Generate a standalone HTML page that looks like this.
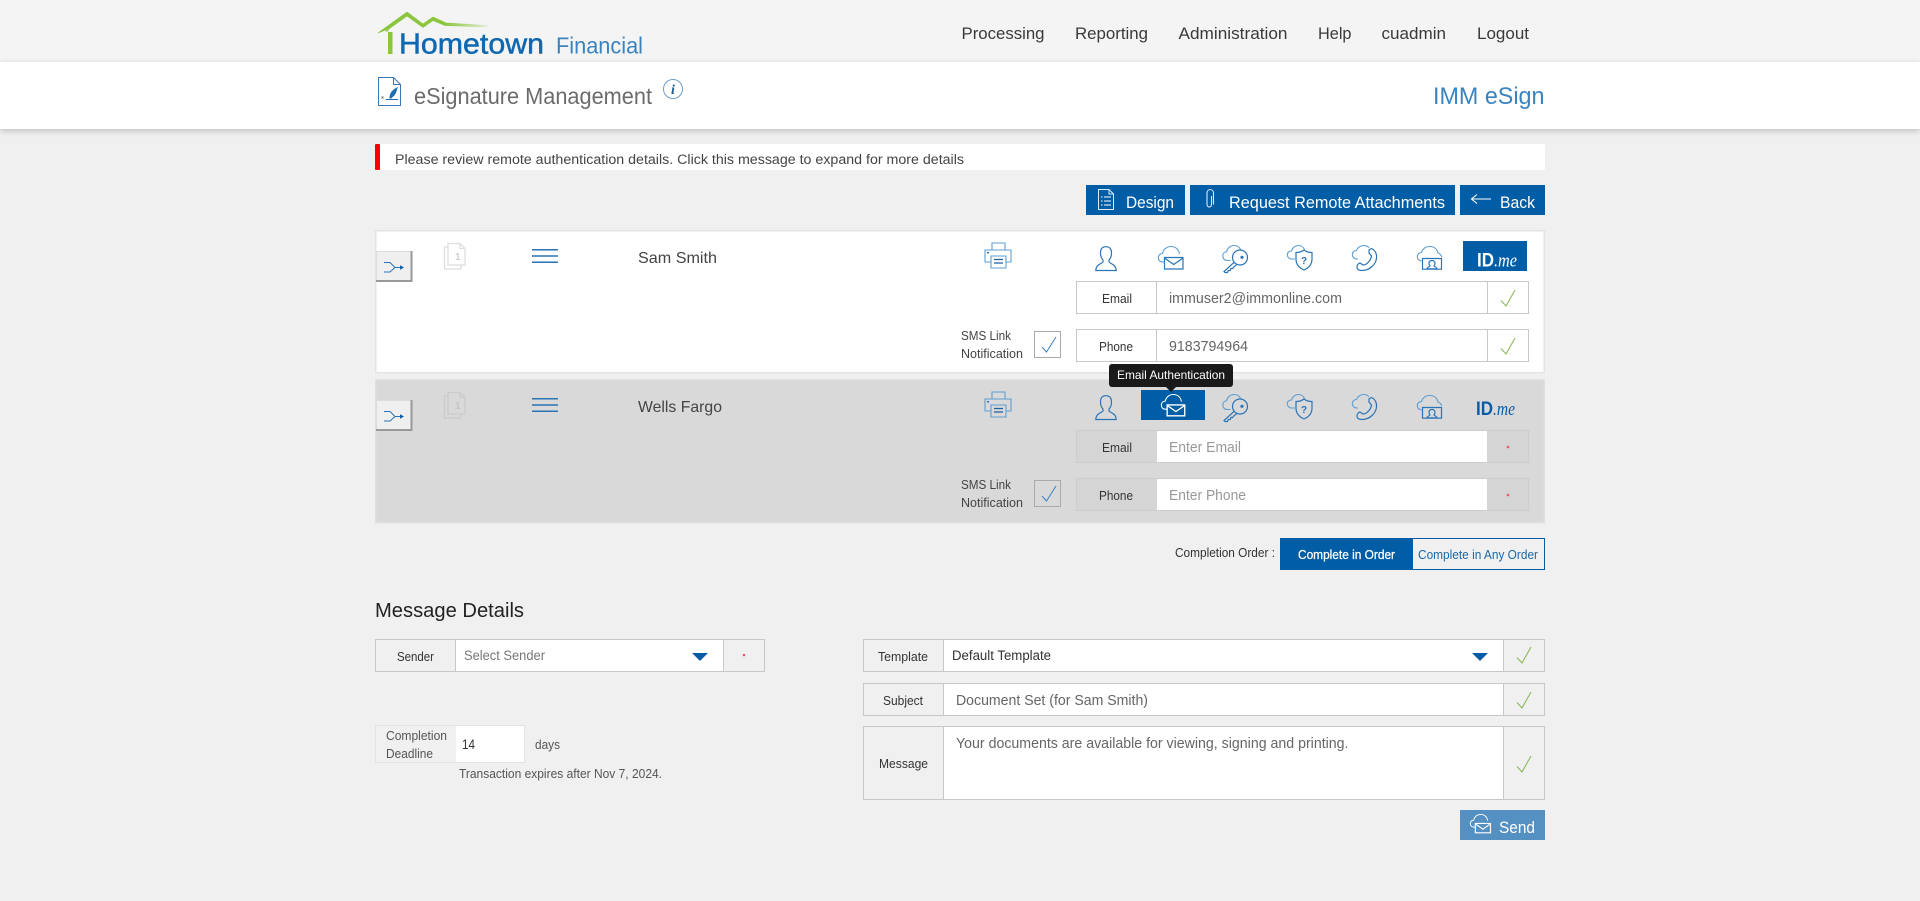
<!DOCTYPE html>
<html lang="en">
<head>
<meta charset="utf-8">
<title>eSignature Management</title>
<style>
html,body{margin:0;padding:0;width:1920px;height:901px;overflow:hidden;background:#f0f0f0}
#top{position:absolute;left:0;top:0;width:1920px;height:62px;background:#f4f4f4}
#bar{position:absolute;left:0;top:62px;width:1920px;height:67px;background:#fff;box-shadow:0 2px 6px rgba(0,0,0,.2)}
svg{position:absolute;left:0;top:0}
text{font-family:"Liberation Sans",sans-serif;white-space:pre}
.n{font-size:17px;fill:#3a3a3a}
.l{font-size:13px;fill:#333}
.v{font-size:15px;fill:#666}
.p{font-size:15px;fill:#999}
.b{font-size:16.5px;fill:#fff}
.g{font-size:13px;fill:#555}
.ic{fill:none;stroke:#2a74b8;stroke-width:1.2}
.cl{fill:none;stroke:#5f9ed2;stroke-width:1.1}
</style>
</head>
<body>
<div id="top"></div>
<div id="bar"></div>
<svg width="1920" height="901" viewBox="0 0 1920 901" xmlns="http://www.w3.org/2000/svg">
<defs>
<linearGradient id="roof" x1="378" x2="487" y1="0" y2="0" gradientUnits="userSpaceOnUse">
<stop offset="0" stop-color="#8cc63f"/><stop offset=".6" stop-color="#8cc63f"/><stop offset="1" stop-color="#8cc63f" stop-opacity=".1"/>
</linearGradient>
<g id="person"><path class="ic" d="M11 .7C7 .7 5.500 3.500 5.500 7c0 3 1 5.500 2.500 7v2c-2 2-7 2.500-7.200 8.500h20.400C21 18.500 16 18 14 16v-2c1.500-1.500 2.500-4 2.500-7 0-3.500-1.500-6.300-5.500-6.300z"/></g>
<g id="mail"><path class="cl" d="M6 16H4.500C1.500 16 .3 13.500 .3 11.500.3 9 2.500 7.500 4.500 7.500 5.500 3 9 .5 13 .5c5 0 8 3.500 8.500 7.500"/><path class="ic" stroke-width="1.500" d="M6.500 11.500h18.500v11.500H6.500zM6.500 12l9.200 6.500L25 12"/></g>
<g id="key"><path class="cl" d="M8 15.500H5C2 15.500 .3 13.500 .3 11 .3 8.500 2 7 4 6.800 5 3 8 .5 11.500 .5c3 0 5.500 1.500 6.500 4"/><circle class="ic" cx="17.500" cy="12.500" r="7.500"/><circle cx="19.500" cy="12.300" r="1.600" fill="#2a74b8"/><path class="ic" d="M11.800 17.200L1.500 26.500l1 1H5l.8-2h2l.6-2h1.800l1-1.500 3-2.300"/></g>
<g id="shield"><path class="cl" d="M8 14H5C2 14 .3 12 .3 9.800.3 7.300 2.500 6 4.500 6 5.500 2.500 8.500 .5 11.500 .5c2.500 0 5 1.500 6 4"/><path class="ic" d="M17 5c2.500 2 5 2.500 8 2.500V14c0 5.500-3.500 9-8 11-4.500-2-8-5.500-8-11V7.500c3 0 5.500-.5 8-2.500z"/><text x="17" y="19" text-anchor="middle" font-size="10" font-weight="700" fill="#2a74b8">?</text></g>
<g id="phone"><path class="cl" d="M6 14H5C2 14 .3 12 .3 9.500.3 7 2.500 5.500 4.500 5.500 5.500 2.500 8.500 .5 11.500 .5c2.500 0 4.500 1 5.500 2.500"/><path class="ic" stroke-width="1.400" d="M17 5l2.500-1.500c3.500 1.500 5.500 5.500 5 9.500-.5 6-6.500 12.500-14.500 12.500-3 0-5-1-5-3.500 0-2 1.500-3.500 3-4l3 2c4 0 8-5 8.500-9L17 8z"/></g>
<g id="video"><path class="cl" d="M4.500 15C2 14.500 .3 13 .3 10.500.3 8 2.500 6.500 4.500 6.500 5.500 3 8.500 .5 12.500 .5c4.500 0 7.500 2.500 8.500 6.500 2 .5 3.500 2.500 3.700 4"/><path class="ic" stroke-width="1.400" d="M5.500 12.500h19v10.700h-19z"/><path class="ic" stroke-width="1" d="M15 14.500c-2 0-3 1.200-3 2.800 0 1.200.5 2 1 2.500 0 1-2.500 1-3 3h10c-.5-2-3-2-3-3 .5-.5 1-1.300 1-2.500 0-1.600-1-2.800-3-2.800z"/></g>
<g id="print"><path class="cl" stroke-width="1.100" d="M992 250v-7h13v7M991 262h-6v-12h26v12h-5"/><path class="cl" stroke-width="1.200" d="M991 256h15v12h-15z"/><path d="M994 259.500h9M994 263h9" stroke="#1b5fa5" stroke-width="1.300"/><rect x="987" y="252" width="2" height="1.500" fill="#2a74b8"/></g>
<g id="pages"><path d="M448 247h-3.500v22h16.500v-4" fill="none" stroke-width="1.300"/><path d="M448 243.500h12l5 5v16.500h-17zM460 243.500v5h5" fill="none" stroke-width="1.300"/></g>
<g id="toggle"><rect x="376.500" y="251.500" width="35" height="29.500" fill="#efefef" stroke="#dcdcdc"/><path d="M411.500 251v30H376" fill="none" stroke="#999" stroke-width="2"/><path d="M384 262.500h6l5 5h7M384 272h6l5-4.500" fill="none" stroke="#2a74b8" stroke-width="1"/><path d="M400 265.300l4 2.200-4 2.200z" fill="#0a5ca6"/></g>
<g id="burger"><path d="M532 249.700h26M532 256h26M532 262.300h26" stroke="#2a72b3" stroke-width="1.500"/></g>
<path id="chk" d="M0 10.500L5 16 14 0" fill="none" stroke="#8ab85a" stroke-width="1.100"/>
</defs>

<!-- logo -->
<path d="M378 33l29-21 16 12 10-7 13 6 41 2.500v1.500l-42-1.500-12-5-10 7-16-11.500-21 15h2v-2z" fill="url(#roof)" stroke="url(#roof)" stroke-width=".7"/>
<path d="M388 32h4.500v22H388z" fill="#8cc63f"/>
<text x="399" y="53.500" font-size="29" fill="#0f68b0" stroke="#0f68b0" stroke-width=".5" textLength="145" lengthAdjust="spacingAndGlyphs">Hometown</text>
<text x="556" y="53.500" font-size="23" fill="#3a83bf" textLength="87" lengthAdjust="spacingAndGlyphs">Financial</text>

<!-- nav -->
<text class="n" x="961.500" y="39" textLength="83" lengthAdjust="spacingAndGlyphs">Processing</text>
<text class="n" x="1075" y="39" textLength="73" lengthAdjust="spacingAndGlyphs">Reporting</text>
<text class="n" x="1178.500" y="39" textLength="109" lengthAdjust="spacingAndGlyphs">Administration</text>
<text class="n" x="1318" y="39" textLength="33.500" lengthAdjust="spacingAndGlyphs">Help</text>
<text class="n" x="1381.500" y="39" textLength="64.500" lengthAdjust="spacingAndGlyphs">cuadmin</text>
<text class="n" x="1477" y="39" textLength="52" lengthAdjust="spacingAndGlyphs">Logout</text>

<!-- title -->
<path d="M378.500 77.500h15l7 7v21h-22zM393.500 77.500v7h7" fill="none" stroke="#3b78b8" stroke-width="1"/>
<path d="M390 98c0-5 3-8 7-10-1 4-2 7-4 8l-2 2zM386 99.500h12" fill="#1f6eb4" stroke="#1f6eb4" stroke-width="1"/>
<path d="M381.500 96.500l2 2M383.500 96.500l-2 2" stroke="#555" stroke-width=".6"/>
<text x="414" y="104" font-size="23" fill="#6b6b6b" textLength="238" lengthAdjust="spacingAndGlyphs">eSignature Management</text>
<circle cx="673" cy="89" r="9.500" fill="#fff" stroke="#6f9fc9"/>
<text x="673" y="94" text-anchor="middle" style="font-family:'Liberation Serif',serif" font-size="14" font-style="italic" font-weight="700" fill="#1a5a96">i</text>
<text x="1433" y="104" font-size="24" fill="#3a83bf" textLength="111.500" lengthAdjust="spacingAndGlyphs">IMM eSign</text>

<!-- alert -->
<rect x="375" y="144" width="1170" height="26" rx="2" fill="#fff"/>
<rect x="375" y="144" width="5" height="26" rx="1" fill="#f00"/>
<text x="395" y="164" font-size="13.500" fill="#444" textLength="569" lengthAdjust="spacingAndGlyphs">Please review remote authentication details. Click this message to expand for more details</text>

<!-- action buttons -->
<rect x="1086" y="185" width="99" height="30" fill="#005da6"/>
<rect x="1190" y="185" width="265" height="30" fill="#005da6"/>
<rect x="1460" y="185" width="85" height="30" fill="#005da6"/>
<path d="M1098.500 189.500h10.500l4.500 4.500v15.500h-15zM1109 189.500v4.500h4.500" fill="none" stroke="#dbe9f5" stroke-width="1"/>
<path d="M1101 197h1.500M1101 201h1.500M1101 205h1.500M1104 197h7M1104 201h7M1104 205h7" stroke="#fff" stroke-width="1.100"/>
<path d="M1212 196v8c0 4-4.500 4-4.500 0v-11c0-4.500 6.500-4.500 6.500 0v11.500" fill="none" stroke="#dbe9f5" stroke-width="1.100" transform="translate(-.5 0)"/>
<path d="M1472 199h19M1477 194.500l-5.500 4.500 5.500 4.500" fill="none" stroke="#fff" stroke-width="1.100"/>
<text class="b" x="1126" y="208" textLength="48" lengthAdjust="spacingAndGlyphs">Design</text>
<text class="b" x="1229" y="208" textLength="216" lengthAdjust="spacingAndGlyphs">Request Remote Attachments</text>
<text class="b" x="1500" y="208" textLength="35" lengthAdjust="spacingAndGlyphs">Back</text>

<!-- row 1 -->
<rect x="375.750" y="230.750" width="1168.500" height="142" fill="#fff" stroke="#e4e4e4" stroke-width="1.500"/>
<use href="#toggle"/>
<use href="#pages" stroke="#dedede"/>
<text x="455" y="260" font-size="10" font-weight="700" fill="#cfcfcf">1</text>
<use href="#burger"/>
<text x="638" y="263" font-size="16" fill="#444" textLength="79" lengthAdjust="spacingAndGlyphs">Sam Smith</text>
<use href="#print"/>
<use href="#person" x="1095" y="246"/>
<use href="#mail" x="1158" y="246"/>
<use href="#key" x="1222.500" y="245"/>
<use href="#shield" x="1287" y="245"/>
<use href="#phone" x="1352" y="245"/>
<use href="#video" x="1417" y="246"/>
<rect x="1463" y="241" width="64" height="30" fill="#005da6"/>
<text x="1477" y="266.500" font-size="19" font-weight="700" fill="#fff" textLength="17" lengthAdjust="spacingAndGlyphs">ID</text>
<text x="1494" y="266.500" font-size="19" font-style="italic" fill="#fff" style="font-family:'Liberation Serif',serif" textLength="23" lengthAdjust="spacingAndGlyphs">.me</text>

<rect x="1076.500" y="281.500" width="452" height="32" fill="#fff" stroke="#c8c8c8"/>
<path d="M1156.500 281v33M1487.500 281v33" stroke="#c8c8c8"/>
<text class="l" x="1102" y="303" textLength="30" lengthAdjust="spacingAndGlyphs">Email</text>
<text class="v" x="1169" y="303" textLength="173" lengthAdjust="spacingAndGlyphs">immuser2@immonline.com</text>
<use href="#chk" x="1501" y="290"/>
<rect x="1076.500" y="329.500" width="452" height="32" fill="#fff" stroke="#c8c8c8"/>
<path d="M1156.500 329v33M1487.500 329v33" stroke="#c8c8c8"/>
<text class="l" x="1099" y="351" textLength="34" lengthAdjust="spacingAndGlyphs">Phone</text>
<text class="v" x="1169" y="351" textLength="79" lengthAdjust="spacingAndGlyphs">9183794964</text>
<use href="#chk" x="1501" y="338"/>

<text x="961" y="340" font-size="12.500" fill="#444" textLength="50" lengthAdjust="spacingAndGlyphs">SMS Link</text>
<text x="961" y="358" font-size="12.500" fill="#444" textLength="62" lengthAdjust="spacingAndGlyphs">Notification</text>
<rect x="1034.500" y="331.500" width="26" height="26" fill="#fff" stroke="#aaa"/>
<path d="M1042 347l4.500 5 9.500-15" fill="none" stroke="#3b82c4" stroke-width="1"/>

<!-- row 2 -->
<rect x="375.750" y="379.750" width="1168.500" height="143" fill="#d9d9d9" stroke="#e0e0e0" stroke-width="1.500"/>
<g transform="translate(0 149)">
<use href="#toggle"/>
<use href="#pages" stroke="#cbcbcb"/>
<text x="455" y="260" font-size="10" font-weight="700" fill="#c4c4c4">1</text>
<use href="#burger"/>
<text x="638" y="263" font-size="16" fill="#444" textLength="84" lengthAdjust="spacingAndGlyphs">Wells Fargo</text>
<use href="#print"/>
<use href="#person" x="1095" y="246"/>
<use href="#key" x="1222.500" y="245"/>
<use href="#shield" x="1287" y="245"/>
<use href="#phone" x="1352" y="245"/>
<use href="#video" x="1417" y="246"/>
<text x="1476" y="266" font-size="19" font-weight="700" fill="#0a5ca6" textLength="17" lengthAdjust="spacingAndGlyphs">ID</text>
<text x="1493" y="266" font-size="19" font-style="italic" fill="#0a5ca6" style="font-family:'Liberation Serif',serif" textLength="22" lengthAdjust="spacingAndGlyphs">.me</text>

<rect x="1076.500" y="281.500" width="452" height="32" fill="#d5d5d5" stroke="#cdcdcd"/>
<rect x="1157" y="282" width="330" height="31" fill="#fff"/>
<text class="l" x="1102" y="303" textLength="30" lengthAdjust="spacingAndGlyphs">Email</text>
<text class="p" x="1169" y="303" textLength="72" lengthAdjust="spacingAndGlyphs">Enter Email</text>
<circle cx="1508" cy="298" r="1.300" fill="#e8596e"/>
<rect x="1076.500" y="329.500" width="452" height="32" fill="#d5d5d5" stroke="#cdcdcd"/>
<rect x="1157" y="330" width="330" height="31" fill="#fff"/>
<text class="l" x="1099" y="351" textLength="34" lengthAdjust="spacingAndGlyphs">Phone</text>
<text class="p" x="1169" y="351" textLength="77" lengthAdjust="spacingAndGlyphs">Enter Phone</text>
<circle cx="1508" cy="346" r="1.300" fill="#e8596e"/>

<text x="961" y="340" font-size="12.500" fill="#444" textLength="50" lengthAdjust="spacingAndGlyphs">SMS Link</text>
<text x="961" y="358" font-size="12.500" fill="#444" textLength="62" lengthAdjust="spacingAndGlyphs">Notification</text>
<rect x="1034.500" y="331.500" width="26" height="26" fill="#d9d9d9" stroke="#aaa"/>
<path d="M1042 347l4.500 5 9.500-15" fill="none" stroke="#3b82c4" stroke-width="1"/>
</g>

<!-- highlighted email icon + tooltip -->
<rect x="1141" y="390" width="64" height="30" fill="#005da6"/>
<g transform="translate(1161 394) scale(.95)">
<path d="M6 16H4.500C1.500 16 .3 13.500 .3 11.500.3 9 2.500 7.500 4.500 7.500 5.500 3 9 .5 13 .5c5 0 8 3.500 8.500 7.500" fill="none" stroke="#fff" stroke-width="1.100"/>
<path d="M6.500 11.500h18.500v11.500H6.500zM6.500 12l9.200 6.500L25 12" fill="#005da6" stroke="#fff" stroke-width="1.400"/>
</g>
<rect x="1109" y="364" width="124" height="23" rx="3" fill="#1a1a1a"/>
<path d="M1166 387h10l-5 5z" fill="#1a1a1a"/>
<text x="1117" y="379" font-size="12" fill="#fff" textLength="108" lengthAdjust="spacingAndGlyphs">Email Authentication</text>

<!-- completion order -->
<text x="1175" y="557" font-size="12.500" fill="#333" textLength="100" lengthAdjust="spacingAndGlyphs">Completion Order :</text>
<rect x="1280.500" y="538.500" width="264" height="31" fill="#f0f0f0" stroke="#005da6"/>
<rect x="1280" y="538" width="133" height="32" fill="#005da6"/>
<text x="1298" y="559" font-size="12.500" fill="#fff" stroke="#fff" stroke-width=".25" textLength="97" lengthAdjust="spacingAndGlyphs">Complete in Order</text>
<text x="1418" y="559" font-size="12.500" fill="#1a68a8" textLength="120" lengthAdjust="spacingAndGlyphs">Complete in Any Order</text>

<!-- message details left -->
<text x="375" y="617" font-size="20" fill="#222" textLength="149" lengthAdjust="spacingAndGlyphs">Message Details</text>
<rect x="375.500" y="639.500" width="389" height="32" fill="#f0f0f0" stroke="#c8c8c8"/>
<rect x="456" y="640" width="267" height="31" fill="#fff"/>
<path d="M455.500 639v33M723.500 639v33" stroke="#c8c8c8"/>
<text class="l" x="397" y="661" textLength="37" lengthAdjust="spacingAndGlyphs">Sender</text>
<text x="464" y="660" font-size="13.500" fill="#777" textLength="81" lengthAdjust="spacingAndGlyphs">Select Sender</text>
<path d="M692 653h16l-8 8z" fill="#0a5ca6"/>
<circle cx="744" cy="655" r="1.300" fill="#e8596e"/>

<rect x="375.500" y="725.500" width="149" height="37" fill="#f0f0f0" stroke="#e2e2e2"/>
<rect x="456" y="726" width="68" height="36" fill="#fff"/>
<text class="g" x="386" y="740" textLength="61" lengthAdjust="spacingAndGlyphs">Completion</text>
<text class="g" x="386" y="758" textLength="47" lengthAdjust="spacingAndGlyphs">Deadline</text>
<text x="462" y="749" font-size="13.500" fill="#333" textLength="13" lengthAdjust="spacingAndGlyphs">14</text>
<text class="g" x="535" y="749" textLength="25" lengthAdjust="spacingAndGlyphs">days</text>
<text x="459" y="778" font-size="12.500" fill="#555" textLength="203" lengthAdjust="spacingAndGlyphs">Transaction expires after Nov 7, 2024.</text>

<!-- message details right -->
<rect x="863.500" y="639.500" width="681" height="32" fill="#f0f0f0" stroke="#c8c8c8"/>
<rect x="944" y="640" width="559" height="31" fill="#fff"/>
<path d="M943.500 639v33M1503.500 639v33" stroke="#c8c8c8"/>
<text class="l" x="878" y="661" textLength="50" lengthAdjust="spacingAndGlyphs">Template</text>
<text x="952" y="660" font-size="13.500" fill="#333" textLength="99" lengthAdjust="spacingAndGlyphs">Default Template</text>
<path d="M1472 653h16l-8 8z" fill="#0a5ca6"/>
<use href="#chk" x="1517" y="647"/>

<rect x="863.500" y="683.500" width="681" height="32" fill="#f0f0f0" stroke="#c8c8c8"/>
<rect x="944" y="684" width="559" height="31" fill="#fff"/>
<path d="M943.500 683v33M1503.500 683v33" stroke="#c8c8c8"/>
<text class="l" x="883" y="705" textLength="40" lengthAdjust="spacingAndGlyphs">Subject</text>
<text x="956" y="705" font-size="14.500" fill="#666" textLength="192" lengthAdjust="spacingAndGlyphs">Document Set (for Sam Smith)</text>
<use href="#chk" x="1517" y="692"/>

<rect x="863.500" y="726.500" width="681" height="73" fill="#f0f0f0" stroke="#c8c8c8"/>
<rect x="944" y="727" width="559" height="72" fill="#fff"/>
<path d="M943.500 726v74M1503.500 726v74" stroke="#c8c8c8"/>
<text class="l" x="879" y="768" textLength="49" lengthAdjust="spacingAndGlyphs">Message</text>
<text x="956" y="748" font-size="14.500" fill="#666" textLength="392.500" lengthAdjust="spacingAndGlyphs">Your documents are available for viewing, signing and printing.</text>
<use href="#chk" x="1517" y="756"/>

<!-- send -->
<rect x="1460" y="810" width="85" height="30" fill="#5590c2"/>
<g transform="translate(1470 814) scale(.82)">
<path d="M6 16H4.500C1.500 16 .3 13.500 .3 11.500.3 9 2.500 7.500 4.500 7.500 5.500 3 9 .5 13 .5c5 0 8 3.500 8.500 7.500" fill="none" stroke="#fff" stroke-width="1.100"/>
<path d="M6.500 11.500h18.500v11.500H6.500zM6.500 12l9.200 6.500L25 12" fill="#5590c2" stroke="#fff" stroke-width="1.400"/>
</g>
<text class="b" x="1499" y="833" textLength="36" lengthAdjust="spacingAndGlyphs">Send</text>
</svg>
</body>
</html>
